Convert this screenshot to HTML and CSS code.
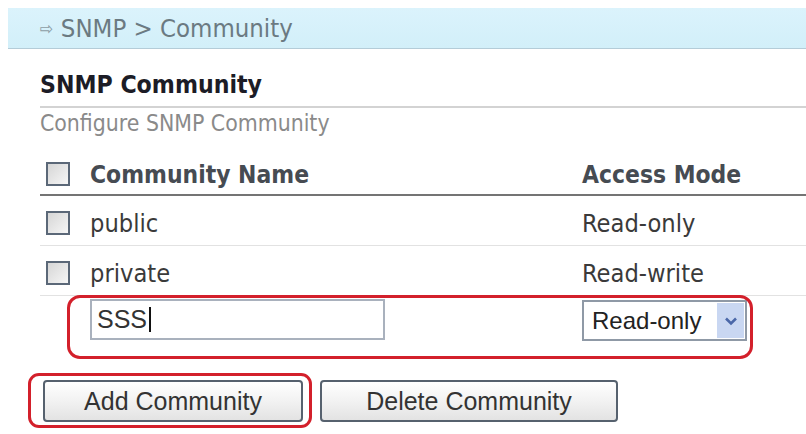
FILE: index.html
```html
<!DOCTYPE html>
<html lang="en">
<head>
<meta charset="utf-8">
<title>SNMP Community</title>
<link rel="stylesheet" href="styles.css">
</head>
<body>
<div class="crumb"><span class="crumb-arrow">⇨</span> SNMP &gt; Community</div>
<main class="content">
  <h1 class="title">SNMP Community</h1>
  <p class="desc">Configure SNMP Community</p>
  <div class="table">
    <div class="row head">
      <span class="c-check"><span class="cb"></span></span>
      <span class="c-name">Community Name</span>
      <span class="c-mode">Access Mode</span>
    </div>
    <div class="row">
      <span class="c-check"><span class="cb"></span></span>
      <span class="c-name">public</span>
      <span class="c-mode">Read-only</span>
    </div>
    <div class="row">
      <span class="c-check"><span class="cb"></span></span>
      <span class="c-name">private</span>
      <span class="c-mode">Read-write</span>
    </div>
    <div class="row edit">
      <span class="c-check"></span>
      <span class="c-name"><span class="input">SSS<span class="caret"></span></span></span>
      <span class="c-mode"><span class="select"><span class="sel-text">Read-only</span><span class="sel-btn"><svg width="14" height="10" viewBox="0 0 14 10"><polyline points="2,2.5 7,7.5 12,2.5" fill="none" stroke="#4a67a8" stroke-width="2.6"/></svg></span></span></span>
    </div>
    <div class="mark mark-edit"></div>
  </div>
  <div class="actions">
    <button class="btn btn-add" type="button">Add Community</button>
    <button class="btn btn-del" type="button">Delete Community</button>
    <div class="mark mark-add"></div>
  </div>
</main>
</body>
</html>
```
FILE: styles.css
```css
html, body {
  margin: 0;
  padding: 0;
  background: #ffffff;
}
body {
  width: 806px;
  height: 434px;
  overflow: hidden;
  font-family: "DejaVu Sans Condensed", "DejaVu Sans", sans-serif;
}
.crumb {
  margin: 8px 0 0 8px;
  height: 40px;
  line-height: 40px;
  padding-left: 32px;
  background: linear-gradient(#dbf3fc, #d2eff9);
  border-bottom: 1px solid #b4ccd8;
  color: #6b7a82;
  font-size: 25.5px;
}
.crumb-arrow {
  font-size: 18px;
  color: #8c9ca4;
  vertical-align: 2px;
}
.content {
  padding-left: 40px;
}
.title {
  margin: 21px 0 0 0;
  font-size: 24.6px;
  line-height: 30px;
  font-weight: bold;
  color: #1c1c26;
  padding-bottom: 6px;
  border-bottom: 2px solid #d3d3d3;
}
.desc {
  margin: 1px 0 0 0;
  font-size: 22.8px;
  line-height: 28px;
  color: #8a8a8a;
}
.table {
  position: relative;
  margin-top: 13px;
}
.row {
  display: grid;
  grid-template-columns: 50px 492px 1fr;
  align-items: center;
  height: 50px;
  padding-top: 5px;
  box-sizing: border-box;
  border-bottom: 1px solid #e2e2e2;
  font-size: 25.2px;
  color: #3a3a3a;
}
.row.head {
  height: 46px;
  padding-top: 4px;
  border-bottom: 2px solid #747474;
  font-size: 24.4px;
  font-weight: bold;
  color: #464b52;
}
.row.edit {
  height: 47px;
  padding-top: 3px;
  align-items: start;
  border-bottom: none;
}
.cb {
  display: block;
  width: 24px;
  height: 24px;
  margin-left: 6px;
  box-sizing: border-box;
  border: 2px solid #5b6878;
  background: linear-gradient(135deg, #d6d6d6, #f6f6f6);
}
.input {
  display: flex;
  align-items: center;
  width: 295px;
  height: 41px;
  box-sizing: border-box;
  border: 2px solid #a9b1bd;
  padding-left: 5px;
  font-family: "Liberation Sans", Arial, sans-serif;
  font-size: 25px;
  color: #333333;
}
.caret {
  display: inline-block;
  width: 2px;
  height: 25px;
  margin-left: 2px;
  background: #111111;
}
.select {
  display: flex;
  align-items: stretch;
  width: 165px;
  height: 41px;
  margin-top: 1px;
  box-sizing: border-box;
  border: 2px solid #8f99a6;
  background: #ffffff;
  font-family: "Liberation Sans", Arial, sans-serif;
  font-size: 24px;
  color: #222222;
}
.sel-text {
  flex: 1;
  padding-left: 8px;
  display: flex;
  align-items: center;
}
.sel-btn {
  width: 27px;
  margin: 1px;
  display: flex;
  align-items: center;
  justify-content: center;
  background: #c9d7f2;
}
.mark {
  position: absolute;
  box-sizing: border-box;
  border: 3px solid #d3202b;
  border-radius: 13px;
  pointer-events: none;
}
.mark-edit {
  left: 27px;
  top: 145px;
  width: 686px;
  height: 64px;
}
.actions {
  position: relative;
  margin-top: 37px;
  display: flex;
  align-items: center;
  gap: 17px;
}
.btn {
  height: 42px;
  box-sizing: border-box;
  border: 2px solid #56616e;
  border-radius: 4px;
  background: linear-gradient(#ffffff, #f2f2f2 50%, #e3e3e3);
  font-family: "Liberation Sans", Arial, sans-serif;
  font-size: 25px;
  color: #333333;
  padding: 0;
  margin: 0;
}
.btn-add {
  width: 260px;
  margin-left: 3px;
}
.btn-del {
  width: 298px;
}
.mark-add {
  left: -12px;
  top: -7px;
  width: 284px;
  height: 55px;
  border-radius: 11px;
}
```
